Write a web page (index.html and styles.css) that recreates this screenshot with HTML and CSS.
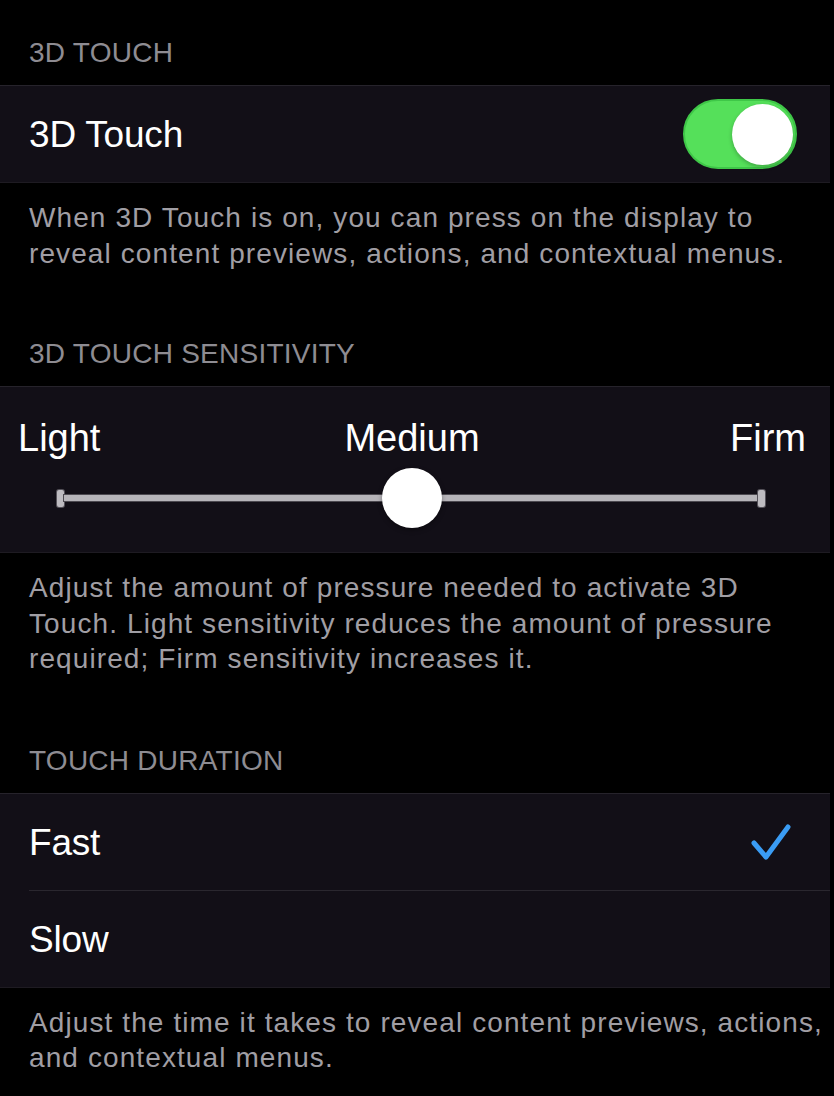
FILE: index.html
```html
<!DOCTYPE html>
<html lang="en">
<head>
<meta charset="utf-8">
<title>3D Touch</title>
<link rel="stylesheet" href="styles.css">
</head>
<body>
<div class="page">
  <section class="group first">
    <div class="header">3D TOUCH</div>
    <div class="cell">
      <div class="row">
        <span class="label">3D Touch</span>
        <span class="toggle on"><span class="knob"></span></span>
      </div>
    </div>
    <div class="footer">When 3D Touch is on, you can press on the display to<br>reveal content previews, actions, and contextual menus.</div>
  </section>

  <section class="group second">
    <div class="header">3D TOUCH SENSITIVITY</div>
    <div class="cell slider-cell">
      <div class="slider-labels">
        <span class="sl-left">Light</span>
        <span class="sl-mid">Medium</span>
        <span class="sl-right">Firm</span>
      </div>
      <div class="slider">
        <span class="cap"></span>
        <span class="track"></span>
        <span class="cap"></span>
        <span class="thumb" style="left: 50%"></span>
      </div>
    </div>
    <div class="footer">Adjust the amount of pressure needed to activate 3D<br>Touch. Light sensitivity reduces the amount of pressure<br>required; Firm sensitivity increases it.</div>
  </section>

  <section class="group third">
    <div class="header">TOUCH DURATION</div>
    <div class="cell">
      <div class="row">
        <span class="label">Fast</span>
        <svg class="check" width="40" height="40" viewBox="0 0 40 40" aria-hidden="true">
          <polyline points="3,21 15,35 37,5" fill="none" stroke="#3a9cf4" stroke-width="5" stroke-linecap="round" stroke-linejoin="round"/>
        </svg>
      </div>
      <div class="sep"></div>
      <div class="row">
        <span class="label">Slow</span>
      </div>
    </div>
    <div class="footer">Adjust the time it takes to reveal content previews, actions,<br>and contextual menus.</div>
  </section>
</div>
</body>
</html>
```

FILE: styles.css
```css
html, body {
  margin: 0;
  padding: 0;
  background: #000;
}

body {
  font-family: "Liberation Sans", Arial, sans-serif;
  color: #fff;
  width: 834px;
  height: 1096px;
  overflow: hidden;
}

.page {
  width: 830px;
  display: flex;
  flex-direction: column;
}

.group {
  display: flex;
  flex-direction: column;
}

.header {
  font-size: 28px;
  line-height: 34px;
  letter-spacing: 0.25px;
  color: #8e8c92;
  padding: 66px 29px 15px;
}

.group.first .header {
  padding-top: 36px;
}

.group.third .header {
  padding-top: 67px;
}

.cell {
  background: #120f17;
  border-top: 1px solid #26232b;
  border-bottom: 1px solid #1e1b22;
  display: flex;
  flex-direction: column;
}

.row {
  height: 96px;
  display: flex;
  align-items: center;
  justify-content: space-between;
  padding: 0 33px 0 29px;
}

.label {
  font-size: 37px;
  letter-spacing: -0.2px;
  color: #fff;
  padding-top: 2px;
}

.sep {
  height: 1px;
  margin-left: 29px;
  background: #2a272f;
}

.footer {
  font-size: 28px;
  line-height: 35.5px;
  letter-spacing: 1.1px;
  color: #a09ea4;
  padding: 17px 0 0 29px;
  white-space: nowrap;
}

/* Toggle */
.toggle {
  width: 114px;
  height: 70px;
  border-radius: 35px;
  box-sizing: border-box;
  background: #55e05a;
  border: 2px solid #3fc748;
  display: flex;
  align-items: center;
  justify-content: flex-end;
  padding: 0 2px;
}

.knob {
  width: 61px;
  height: 61px;
  border-radius: 50%;
  background: #fff;
  box-shadow: 0 2px 4px rgba(0, 0, 0, 0.25);
}

/* Check */
.check {
  display: block;
  margin-right: 6px;
}

/* Slider */
.slider-cell {
  height: 165px;
  box-sizing: content-box;
}

.slider-labels {
  display: grid;
  grid-template-columns: 1fr auto 1fr;
  align-items: center;
  font-size: 38px;
  line-height: 44px;
  padding: 29px 24px 0 18px;
}

.sl-left { justify-self: start; }
.sl-mid { justify-self: center; }
.sl-right { justify-self: end; }

.slider {
  position: relative;
  margin: 8px 65px 0 57px;
  height: 60px;
  display: flex;
  align-items: center;
}

.cap {
  width: 7px;
  height: 17px;
  border-radius: 2px;
  background: #bdbbc0;
  box-shadow: 0 0 0 1px #55525a;
  flex: none;
}

.track {
  flex: 1;
  height: 6px;
  background: #b6b4b9;
  box-shadow: 0 0 0 1px #4c4950;
}

.thumb {
  position: absolute;
  top: 0;
  width: 60px;
  height: 60px;
  margin-left: -29px;
  border-radius: 50%;
  background: #fff;
  box-shadow: 0 2px 5px rgba(0, 0, 0, 0.35);
}
```
